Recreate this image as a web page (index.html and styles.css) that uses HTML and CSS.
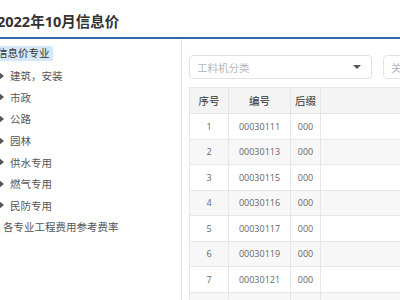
FILE: index.html
```html
<!DOCTYPE html>
<html lang="zh-CN">
<head>
    <meta charset="UTF-8">
    <title>2022年10月信息价</title>
    <link rel="stylesheet" href="styles.css">
</head>
<body>
    <header class="page-header">
        <h1>2022年10月信息价</h1>
    </header>

    <div class="layout">
        <aside class="side">
            <ul class="tree">
                <li class="node root"><span class="label active">信息价专业</span></li>
                <li class="node"><span class="arrow"></span><span class="label">建筑，安装</span></li>
                <li class="node"><span class="arrow"></span><span class="label">市政</span></li>
                <li class="node"><span class="arrow"></span><span class="label">公路</span></li>
                <li class="node"><span class="arrow"></span><span class="label">园林</span></li>
                <li class="node"><span class="arrow"></span><span class="label">供水专用</span></li>
                <li class="node"><span class="arrow"></span><span class="label">燃气专用</span></li>
                <li class="node"><span class="arrow"></span><span class="label">民防专用</span></li>
                <li class="node leaf"><span class="label">各专业工程费用参考费率</span></li>
            </ul>
        </aside>

        <main class="content">
            <div class="filters">
                <div class="select">
                    <span class="placeholder">工料机分类</span>
                    <span class="caret"></span>
                </div>
                <div class="search">
                    <span class="placeholder">关键字</span>
                </div>
            </div>

            <table class="grid">
                <thead>
                    <tr>
                        <th class="col-no">序号</th>
                        <th class="col-code">编号</th>
                        <th class="col-suffix">后缀</th>
                        <th></th>
                    </tr>
                </thead>
                <tbody>
                    <tr><td>1</td><td>00030111</td><td>000</td><td></td></tr>
                    <tr><td>2</td><td>00030113</td><td>000</td><td></td></tr>
                    <tr><td>3</td><td>00030115</td><td>000</td><td></td></tr>
                    <tr><td>4</td><td>00030116</td><td>000</td><td></td></tr>
                    <tr><td>5</td><td>00030117</td><td>000</td><td></td></tr>
                    <tr><td>6</td><td>00030119</td><td>000</td><td></td></tr>
                    <tr><td>7</td><td>00030121</td><td>000</td><td></td></tr>
                    <tr><td>8</td><td>00030123</td><td>000</td><td></td></tr>
                </tbody>
            </table>
        </main>
    </div>
</body>
</html>
```

FILE: styles.css
```css
* {
    box-sizing: border-box;
    margin: 0;
    padding: 0;
}

body {
    width: 400px;
    height: 300px;
    overflow: hidden;
    background-color: #fff;
    color: #555;
    font-family: 'Open Sans', 'Noto Sans CJK SC', sans-serif;
}

.page-header {
    height: 39px;
    border-bottom: 2px solid #2f6aa6;
    padding-top: 12px;
}

.page-header h1 {
    margin-left: -3px;
    font-size: 14.5px;
    line-height: 20px;
    font-weight: 700;
    color: #333;
}

.layout {
    display: flex;
    height: 261px;
}

/* left tree */
.side {
    width: 182px;
    flex-shrink: 0;
    border-right: 1px solid #e2e2e2;
}

.tree {
    list-style: none;
    padding-top: 6px;
}

.node {
    display: flex;
    align-items: center;
    height: 21.6px;
    font-size: 10.5px;
    color: #555;
    white-space: nowrap;
}

.node.root {
    margin-left: -4px;
    height: 16px;
    margin-bottom: 4px;
}

.label.active {
    background-color: #d7e7fa;
    color: #333;
    border-radius: 2px;
    padding: 0 3px 0 1px;
    line-height: 15px;
}

.arrow {
    width: 0;
    height: 0;
    margin-left: -1px;
    margin-right: 6px;
    border-top: 4px solid transparent;
    border-bottom: 4px solid transparent;
    border-left: 5px solid #555;
}

.leaf {
    padding-left: 3px;
}

/* right content */
.content {
    flex: 1;
    padding: 16px 0 0 7px;
    overflow: hidden;
}

.filters {
    display: flex;
    gap: 11px;
    margin-bottom: 8px;
}

.select,
.search {
    height: 24px;
    border: 1px solid #e2e2e2;
    border-radius: 4px;
    display: flex;
    align-items: center;
    padding: 0 7px;
    font-size: 10.5px;
}

.select {
    width: 183px;
    justify-content: space-between;
}

.search {
    flex: 1;
    margin-right: -40px;
}

.placeholder {
    color: #b5b5b5;
}

.caret {
    width: 0;
    height: 0;
    margin-right: 3px;
    border-left: 4px solid transparent;
    border-right: 4px solid transparent;
    border-top: 4px solid #555;
}

.grid {
    width: 260px;
    border-collapse: collapse;
    table-layout: fixed;
}

.grid th,
.grid td {
    border: 1px solid #e6e6e6;
    text-align: center;
    white-space: nowrap;
    overflow: hidden;
}

.grid th {
    height: 26px;
    background-color: #f4f4f4;
    font-size: 10.5px;
    font-weight: 400;
    color: #333;
}

.grid td {
    height: 25.5px;
    font-size: 9px;
    color: #666;
}

.grid tbody tr:nth-child(even) td {
    background-color: #f7f7f7;
}

.col-no {
    width: 39px;
}

.col-code {
    width: 62px;
}

.col-suffix {
    width: 30px;
}
```
